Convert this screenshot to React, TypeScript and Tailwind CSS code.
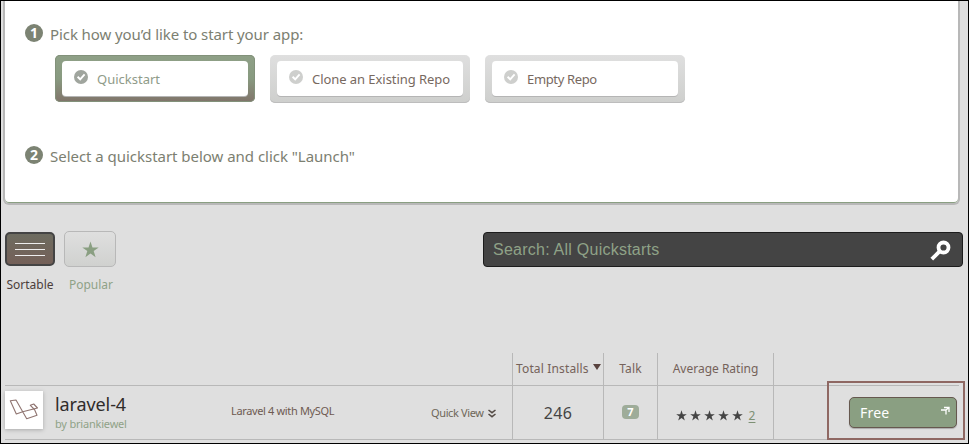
import React from "react";

function StepBadge({ n }: { n: string }) {
  return (
    <span className="mt-[2px] flex h-[18px] w-[18px] shrink-0 items-center justify-center rounded-full bg-[#7c8373] text-[14px] leading-none font-bold text-white">
      {n}
    </span>
  );
}

function CheckIcon({ color }: { color: string }) {
  return (
    <svg width="14" height="14" viewBox="0 0 14 14" className="-mt-1 shrink-0">
      <circle cx="7" cy="7" r="7" fill={color} />
      <path d="M3.6 6.8 6.2 9.3 10.6 4.4" fill="none" stroke="#fff" strokeWidth="1.9" />
    </svg>
  );
}

function Choice({ label, selected, text }: { label: string; selected?: boolean; text: string }) {
  return (
    <div
      className={
        "w-[200px] rounded-[5px] px-[7px] pt-[6px] " +
        (selected
          ? "h-[47px] bg-gradient-to-b from-[#8fa087] via-[#889a80] to-[#80746a] shadow-[inset_0_0_0_1px_#82917a]"
          : "h-[48px] bg-gradient-to-b from-[#dfdfdf] to-[#cecfcd] shadow-[inset_0_-1px_0_#bdbdbd]")
      }
    >
      <div className="flex h-[35px] items-center gap-[9px] rounded-[4px] bg-white pl-3 shadow-[0_1px_0_#b5b5b5]">
        <CheckIcon color={selected ? "#a0a59e" : "#cecfcd"} />
        <span className={"whitespace-nowrap text-[13px] leading-4 " + text}>{label}</span>
      </div>
    </div>
  );
}

function Star({ size, color }: { size: number; color: string }) {
  return (
    <svg width={size} height={size} viewBox="0 0 24 24" fill={color} className="shrink-0">
      <path d="M12 .8 14.8 9H23.6L16.5 14.2 19.2 22.8 12 17.6 4.8 22.8 7.5 14.2 .4 9H9.2Z" />
    </svg>
  );
}

export default function App() {
  return (
    <div className="flex h-[444px] w-[969px] flex-col overflow-hidden border border-black bg-[#dfdfdf] font-['Noto_Sans','Open_Sans',sans-serif] text-[#6d6a5f]">
      <section className="ml-[2px] h-[204px] w-[957px] shrink-0 rounded-b-[6px] border-x-2 border-b-2 border-[#b8b8b8] bg-white pl-[20px] pt-[22px] shadow-[inset_0_-1px_0_#8a9f82]">
        <div className="flex h-[18px] items-center gap-[7px]">
          <StepBadge n="1" />
          <span className="whitespace-nowrap pt-[3px] text-[15px] leading-5 tracking-[-0.09px] text-[#7c8071]">Pick how you’d like to start your app:</span>
        </div>
        <div className="mt-[14px] ml-[30px] flex h-12 gap-[15px]">
          <Choice label="Quickstart" selected text="text-[#8f9b89]" />
          <Choice label="Clone an Existing Repo" text="text-[#77695f] tracking-[-0.06px]" />
          <Choice label="Empty Repo" text="text-[#77695f] tracking-[-0.35px]" />
        </div>
        <div className="mt-[42px] flex h-[18px] items-center gap-[7px]">
          <StepBadge n="2" />
          <span className="whitespace-nowrap pt-[3px] text-[15px] leading-5 tracking-[-0.03px] text-[#7c8071]">Select a quickstart below and click "Launch"</span>
        </div>
      </section>

      <div className="flex h-[148px] shrink-0 items-start pl-1 pt-[26px]">
        <div className="flex w-[50px] flex-col items-center">
          <div className="mt-px flex h-[34px] w-[50px] flex-col items-center justify-center gap-[5px] rounded-[5px] border-2 border-[#444] bg-gradient-to-b from-[#6d6c60] to-[#746058]">
            <span className="h-px w-[30px] bg-[#eee]" />
            <span className="h-px w-[30px] bg-[#eee]" />
            <span className="h-px w-[30px] bg-[#eee]" />
          </div>
          <span className="mt-[9px] text-[12px] leading-5 text-[#4b3e3b]">Sortable</span>
        </div>
        <div className="ml-[9px] flex w-[52px] flex-col items-center">
          <div className="flex h-[36px] w-[52px] items-center justify-center rounded-[5px] border border-[#b8b8b8] bg-gradient-to-b from-[#dfdfdf] to-[#d0d1cf] pt-px">
            <Star size={17} color="#8a9f82" />
          </div>
          <span className="mt-2 pl-[2px] text-[12px] leading-5 text-[#8fa287]">Popular</span>
        </div>
        <div className="mt-px ml-[367px] flex h-[35px] w-[480px] items-center justify-between rounded-[4px] border border-[#1c1c1c] bg-[#444] pr-[11px] pl-[9px]">
          <span className="font-['Liberation_Sans',Arial,sans-serif] text-[16px] leading-5 tracking-[0.24px] text-[#8fa287]">Search: All Quickstarts</span>
          <svg width="21" height="21" viewBox="0 0 21 21" fill="none" stroke="#fff" className="mt-[2px]">
            <circle cx="13.5" cy="7.5" r="5" strokeWidth="3.8" />
            <path d="M9.6 11.4 1.8 19.2" strokeWidth="3.8" />
          </svg>
        </div>
      </div>

      <div className="ml-1 flex h-[33px] w-[954px] shrink-0 border-b border-[#b8b8b8] text-[12px] leading-[31px] text-[#75625a]">
        <div className="w-[508px] shrink-0 border-r border-[#b8b8b8]" />
        <div className="flex w-[91px] shrink-0 gap-1 border-r border-[#b8b8b8] pl-[3px] whitespace-nowrap">
          <span className="tracking-[0.15px]">Total Installs</span>
          <svg width="8" height="6" viewBox="0 0 8 6" className="mt-[11px] shrink-0"><path d="M0 0H8L4 6Z" fill="#59433f" /></svg>
        </div>
        <div className="w-[54px] shrink-0 border-r border-[#b8b8b8] text-center tracking-[0.2px]">Talk</div>
        <div className="w-[116px] shrink-0 border-r border-[#b8b8b8] text-center">Average Rating</div>
      </div>

      <div className="flex h-[54px] w-[963px] shrink-0 pl-1">
        <div className="flex h-[54px] w-[508px] shrink-0 items-start border-r border-b border-[#b8b8b8]">
          <div className="mt-[5px] flex h-[38px] w-[38px] items-center justify-center bg-white shadow-[0_1px_4px_#aaa]">
            <svg width="30" height="22" viewBox="0 0 30 22" fill="none" stroke="#8f7470" strokeWidth="1.1" strokeLinejoin="round">
              <path d="M1.3 1.7 7 1 13.7 12.7 28.5 9 24.7 5 21.3 6.3 25.5 10.5 28 16.3 17.7 19.7 13.7 12.7 7.3 15Z" />
            </svg>
          </div>
          <div className="ml-3 w-[176px] pt-[7px]">
            <div className="text-[18px] leading-[22px] tracking-[-0.1px] text-[#302c2a]">laravel-4</div>
            <div className="mt-[2px] text-[11px] leading-[14px] tracking-[-0.2px] text-[#8fa287]">by briankiewel</div>
          </div>
          <span className="w-[200px] whitespace-nowrap pt-[17px] text-[11px] leading-4 tracking-[-0.35px] text-[#6e5a51]">Laravel 4 with MySQL</span>
          <span className="flex items-center gap-1 whitespace-nowrap pt-[19px] text-[11px] leading-4 text-[#6e6658]">
            <span className="tracking-[-0.38px]">Quick View</span>
            <svg width="8" height="9" viewBox="0 0 8 9" fill="none" stroke="#544b45" strokeWidth="1.5"><path d="M.5 1 4 3.7 7.5 1M.5 5 4 7.7 7.5 5" /></svg>
          </span>
        </div>
        <div className="w-[91px] shrink-0 border-r border-b border-[#b8b8b8] pt-[15px] text-center text-[16px] leading-6 tracking-[0.3px] text-[#444]">246</div>
        <div className="flex w-[54px] shrink-0 justify-center border-r border-b border-[#b8b8b8] pt-[19px]">
          <span className="h-[14px] w-[17px] rounded-[4px] bg-[#9eac99] text-center text-[11px] leading-[14px] font-bold text-white">7</span>
        </div>
        <div className="flex w-[116px] shrink-0 items-center justify-center gap-[3px] border-r border-b border-[#b8b8b8] pt-[6px]">
          {[0, 1, 2, 3, 4].map((i) => <Star key={i} size={11} color="#444" />)}
          <span className="ml-[3px] text-[12px] leading-4 text-[#7d9074] underline underline-offset-2">2</span>
        </div>
        <div className="w-[53px] shrink-0 border-b border-[#b8b8b8]" />
        <div className="-mt-[5px] h-[59px] w-[138px] shrink-0 border-2 border-[#8f6863] pt-[14px] pl-[20px]">
          <div className="flex h-[31px] w-[108px] items-center justify-between rounded-[5px] border border-[#66584f] bg-[#8a9f82] pr-[6px] pl-[10px] shadow-[0_1px_1px_#aaa]">
            <span className="text-[14px] leading-5 tracking-[0.2px] text-white">Free</span>
            <svg width="9" height="9" viewBox="0 0 9 9" fill="none" stroke="#fff" strokeWidth="1.3" className="-mt-1"><path d="M3 1.5H8V6M0 4H5V8.5M5 4 8 1.5" /></svg>
          </div>
        </div>
      </div>
    </div>
  );
}
